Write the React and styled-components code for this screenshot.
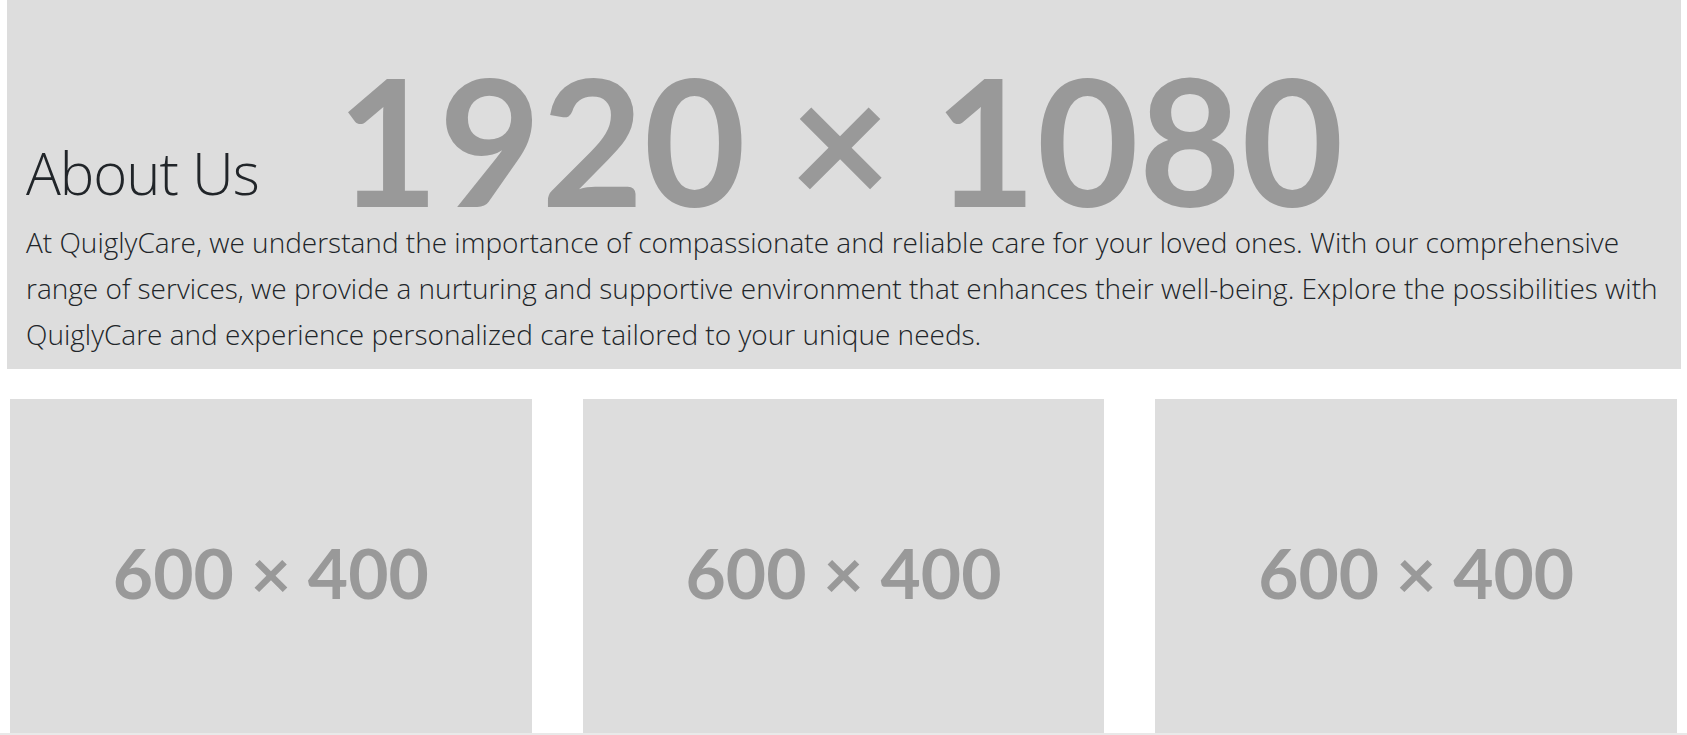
import React from 'react';
import styled, { createGlobalStyle } from 'styled-components';

const GlobalStyle = createGlobalStyle`
  html, body {
    margin: 0;
    padding: 0;
    background: #fff;
    overflow: hidden;
  }
  body {
    font-family: "Open Sans", "Noto Sans", sans-serif;
    color: #212529;
  }
`;

const Page = styled.main`
  display: flex;
  flex-direction: column;
  gap: 30px;
  height: 100vh;
  box-sizing: border-box;
  overflow: hidden;
  border-bottom: 2px solid #e9e9e9;
`;

const Hero = styled.section`
  position: relative;
  flex-shrink: 0;
  margin: 0 6px 0 7px;
  height: 369px;
  background: #dddddd;
  overflow: hidden;
`;

const HeroPicture = styled.div`
  position: absolute;
  top: 0;
  left: 0;
  right: 0;
  height: 278px;
  padding-right: 8px;
  display: flex;
  align-items: center;
  justify-content: center;
  font-family: Lato, sans-serif;
  font-weight: 700;
  font-size: 176.5px;
  line-height: 1;
  color: #999999;
  white-space: nowrap;
`;

const HeroText = styled.div`
  position: relative;
  display: flex;
  flex-direction: column;
  padding: 138px 19px 0 19px;
`;

const Title = styled.h1`
  margin: 0;
  font-weight: 300;
  font-size: 58px;
  line-height: 70px;
  color: #212529;
  letter-spacing: -1px;
`;

const Lead = styled.p`
  margin: 11px 0 0;
  font-weight: 300;
  font-size: 28px;
  line-height: 46px;
  color: #212529;
`;

const Cards = styled.div`
  display: grid;
  grid-template-columns: repeat(3, 1fr);
  align-items: start;
  gap: 51px;
  padding: 0 10px;
`;

const Placeholder = styled.div`
  aspect-ratio: 3 / 2;
  background: #dddddd;
  display: flex;
  align-items: center;
  justify-content: center;
  padding-bottom: 4px;
  font-family: Lato, sans-serif;
  font-weight: 700;
  font-size: ${props => props.size}px;
  line-height: 1;
  color: #999999;
  white-space: nowrap;
`;

const cards = ['600 × 400', '600 × 400', '600 × 400'];

export default function App() {
  return (
    <>
      <GlobalStyle />
      <Page>
        <Hero>
          <HeroPicture>1920 × 1080</HeroPicture>
          <HeroText>
            <Title>About Us</Title>
            <Lead>
              At QuiglyCare, we understand the importance of compassionate and reliable care for your loved ones. With our comprehensive range of services, we provide a nurturing and supportive environment that enhances their well-being. Explore the possibilities with QuiglyCare and experience personalized care tailored to your unique needs.
            </Lead>
          </HeroText>
        </Hero>
        <Cards>
          {cards.map((label, i) => (
            <Placeholder key={i} size={69.5}>{label}</Placeholder>
          ))}
        </Cards>
      </Page>
    </>
  );
}
